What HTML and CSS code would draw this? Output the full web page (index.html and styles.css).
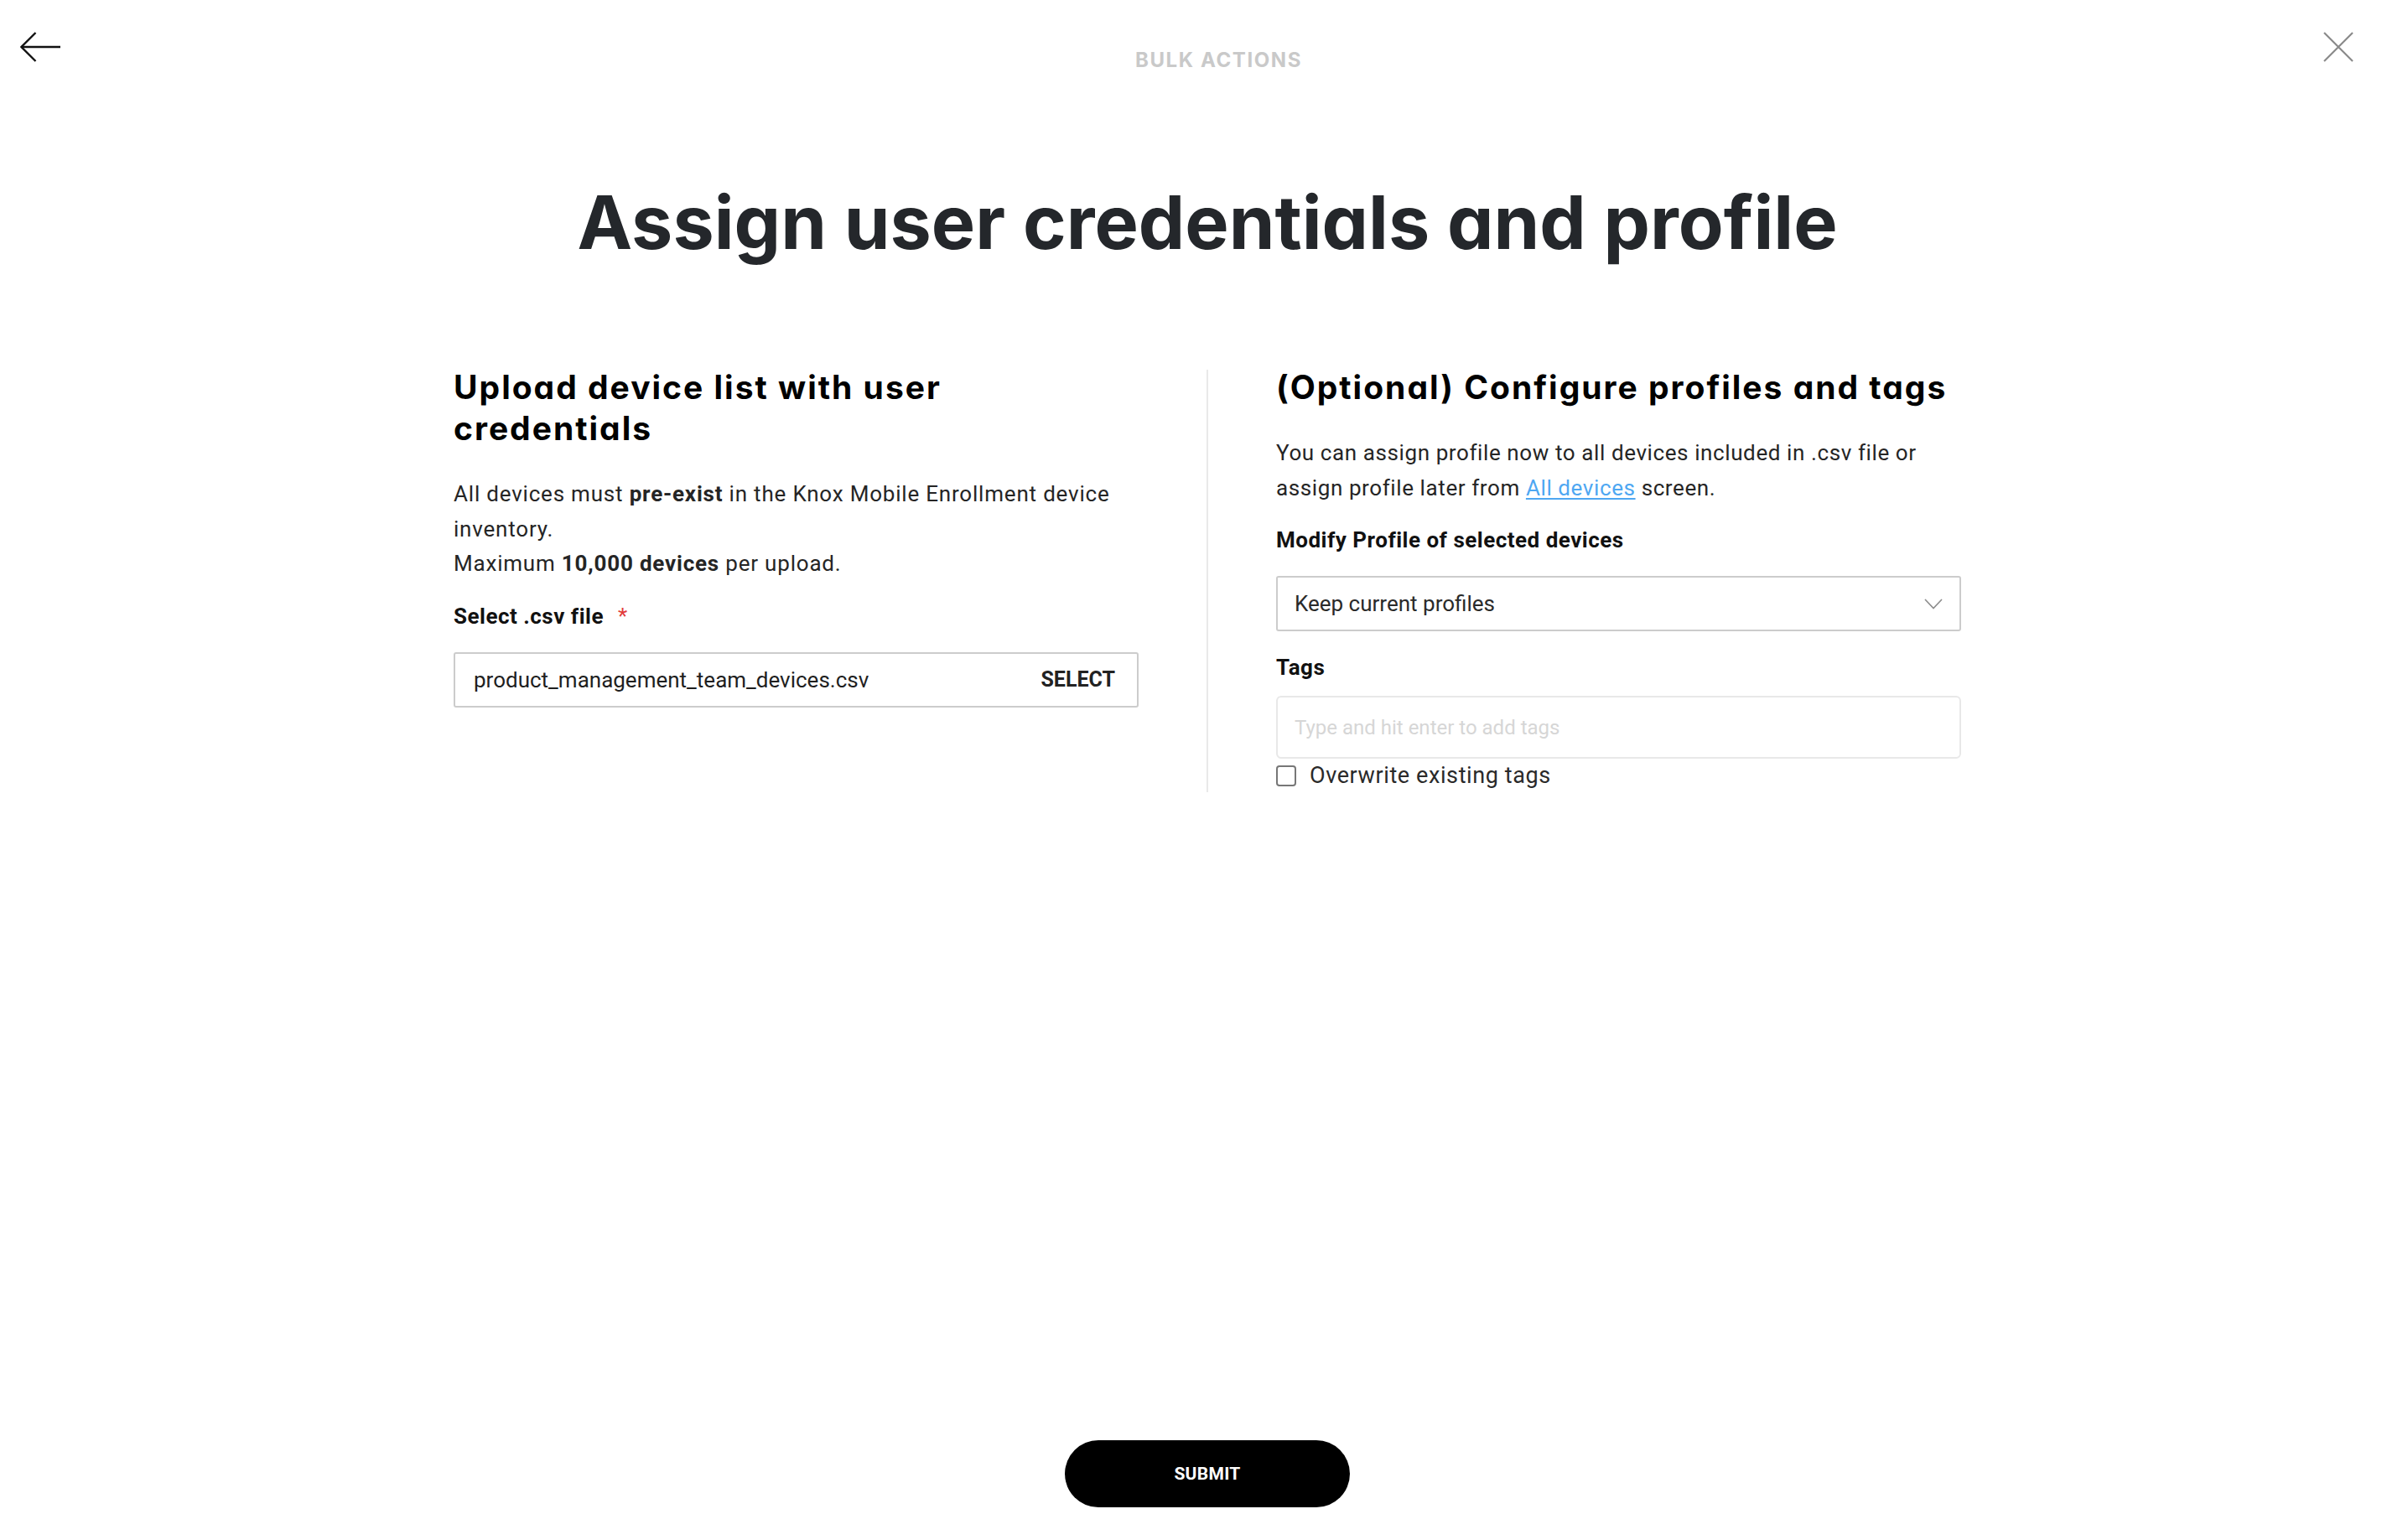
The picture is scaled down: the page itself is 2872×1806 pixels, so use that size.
FILE: index.html
```html
<!DOCTYPE html>
<html lang="en">
<head>
<meta charset="utf-8">
<title>Bulk actions - Assign user credentials and profile</title>
<link rel="stylesheet" href="styles.css">
</head>
<body>
<div class="page">
  <header class="topbar">
    <button class="icon-btn back" aria-label="Back">
      <svg width="48" height="36" viewBox="0 0 48 36" fill="none" stroke="#111" stroke-width="2.4" stroke-linecap="butt" stroke-linejoin="miter">
        <path d="M18.5 1 L1.5 18 L18.5 35"/>
        <path d="M1.5 18 H48"/>
      </svg>
    </button>
    <div class="eyebrow">BULK ACTIONS</div>
    <button class="icon-btn close" aria-label="Close">
      <svg width="36" height="36" viewBox="0 0 36 36" fill="none" stroke="#8a8a8a" stroke-width="2.2">
        <path d="M1 1 L35 35 M35 1 L1 35"/>
      </svg>
    </button>
  </header>

  <main class="content">
    <h1 class="title">Assign user credentials and profile</h1>
    <div class="columns">
      <section class="col">
        <h2 class="section-title narrow">Upload device list with user credentials</h2>
        <p class="desc">All devices must <b>pre-exist</b> in the Knox Mobile Enrollment device inventory.<br>Maximum <b>10,000 devices</b> per upload.</p>
        <div class="field-label">Select .csv file <span class="req">*</span></div>
        <div class="file-input">
          <span class="file-name">product_management_team_devices.csv</span>
          <span class="file-btn">SELECT</span>
        </div>
      </section>
      <div class="divider"></div>
      <section class="col col-right">
        <h2 class="section-title">(Optional) Configure profiles and tags</h2>
        <p class="desc">You can assign profile now to all devices included in .csv file or assign profile later from <a class="link" href="#">All devices</a> screen.</p>
        <div class="field-label">Modify Profile of selected devices</div>
        <div class="select">
          <span>Keep current profiles</span>
          <svg class="chev" width="22" height="13" viewBox="0 0 22 13" fill="none" stroke="#8c8c8c" stroke-width="1.6">
            <path d="M1 1 L11 11.5 L21 1"/>
          </svg>
        </div>
        <div class="field-label tags-label">Tags</div>
        <div class="tags-input">Type and hit enter to add tags</div>
        <label class="check-row">
          <span class="checkbox"></span>
          <span>Overwrite existing tags</span>
        </label>
      </section>
    </div>
  </main>

  <footer class="actions">
    <button class="submit">SUBMIT</button>
  </footer>
</div>
</body>
</html>
```

FILE: styles.css
```css
* { box-sizing: border-box; }

html, body {
  margin: 0;
  padding: 0;
  background: #ffffff;
}

body {
  font-family: Roboto, "Noto Sans", sans-serif;
  color: #252525;
}

.page {
  height: 100vh;
  display: flex;
  flex-direction: column;
  padding-left: 8px;
}

.topbar {
  display: grid;
  grid-template-columns: 1fr auto 1fr;
  align-items: start;
  padding: 38px 65px 0 16px;
}

.icon-btn {
  border: 0;
  background: none;
  padding: 0;
  margin: 0;
  cursor: pointer;
  line-height: 0;
}

.icon-btn.back { justify-self: start; }
.icon-btn.close { justify-self: end; }

.eyebrow {
  margin-top: 22px;
  padding-left: 76px;
  font-family: Inter, "Noto Sans", sans-serif;
  font-weight: 700;
  font-size: 24px;
  line-height: 24px;
  letter-spacing: 1.6px;
  color: #c9c9c9;
}

.content {
  flex: 1;
  display: flex;
  flex-direction: column;
  align-items: center;
}

.title {
  margin: 137px 0 0;
  font-family: Inter, "Noto Sans", sans-serif;
  font-feature-settings: "cv11" 1;
  font-weight: 700;
  font-size: 88px;
  line-height: 88px;
  letter-spacing: 0;
  color: #24272b;
}

.columns {
  margin-top: 128px;
  display: flex;
  gap: 81px;
}

.col {
  width: 817px;
  display: flex;
  flex-direction: column;
  align-items: flex-start;
}

.col-right { padding-bottom: 4px; }

.divider {
  width: 2px;
  margin-top: 4px;
  background: #e9e9e9;
}

.section-title {
  margin: 0;
  width: 817px;
  font-family: Inter, "Noto Sans", sans-serif;
  font-feature-settings: "cv11" 1;
  font-weight: 700;
  font-size: 39px;
  line-height: 49px;
  letter-spacing: 2px;
  color: #000;
}

.section-title.narrow { width: 700px; }

.desc {
  margin: 34px 0 0;
  font-size: 26px;
  line-height: 41.5px;
  letter-spacing: 0.8px;
  color: #252525;
}

.col-right .desc { letter-spacing: 0.6px; }

.desc b { font-weight: 700; }

.link {
  color: #4ea7f2;
  text-decoration: underline;
  text-underline-offset: 3px;
}

.field-label {
  margin-top: 20px;
  font-size: 26px;
  line-height: 42px;
  font-weight: 700;
  letter-spacing: 0.5px;
  color: #111;
}

.req {
  color: #e23b3b;
  font-weight: 400;
  margin-left: 10px;
}

.file-input {
  margin-top: 22px;
  width: 817px;
  height: 66px;
  border: 2px solid #cccccc;
  border-radius: 3px;
  display: flex;
  align-items: center;
  justify-content: space-between;
  padding: 0 26px 0 22px;
  font-size: 26px;
  letter-spacing: 0;
}

.file-name { color: #1f1f1f; }

.file-btn {
  font-weight: 700;
  color: #222;
  font-size: 25px;
  letter-spacing: 0;
}

.select {
  margin-top: 22px;
  width: 817px;
  height: 66px;
  border: 2px solid #cccccc;
  border-radius: 3px;
  display: flex;
  align-items: center;
  justify-content: space-between;
  padding: 0 20px 0 20px;
  font-size: 26px;
  letter-spacing: 0;
  color: #2a2a2a;
}

.tags-label { margin-top: 22px; }

.tags-input {
  margin-top: 13px;
  width: 817px;
  height: 75px;
  border: 2px solid #e8e8e8;
  border-radius: 6px;
  display: flex;
  align-items: center;
  padding: 0 20px;
  font-size: 24px;
  color: #d6d6d6;
}

.check-row {
  margin-top: 4px;
  display: flex;
  align-items: center;
  gap: 16px;
  font-size: 27px;
  line-height: 32px;
  letter-spacing: 0.6px;
  color: #2a2a2a;
}

.checkbox {
  width: 24px;
  height: 25px;
  border: 2px solid #777;
  border-radius: 4px;
  background: #fff;
}

.actions {
  display: flex;
  justify-content: center;
  padding-bottom: 8px;
}

.submit {
  width: 340px;
  height: 80px;
  border: 0;
  border-radius: 40px;
  background: #000;
  color: #fff;
  font-family: Roboto, "Noto Sans", sans-serif;
  font-weight: 700;
  font-size: 21px;
  letter-spacing: 0.3px;
  cursor: pointer;
}
```
